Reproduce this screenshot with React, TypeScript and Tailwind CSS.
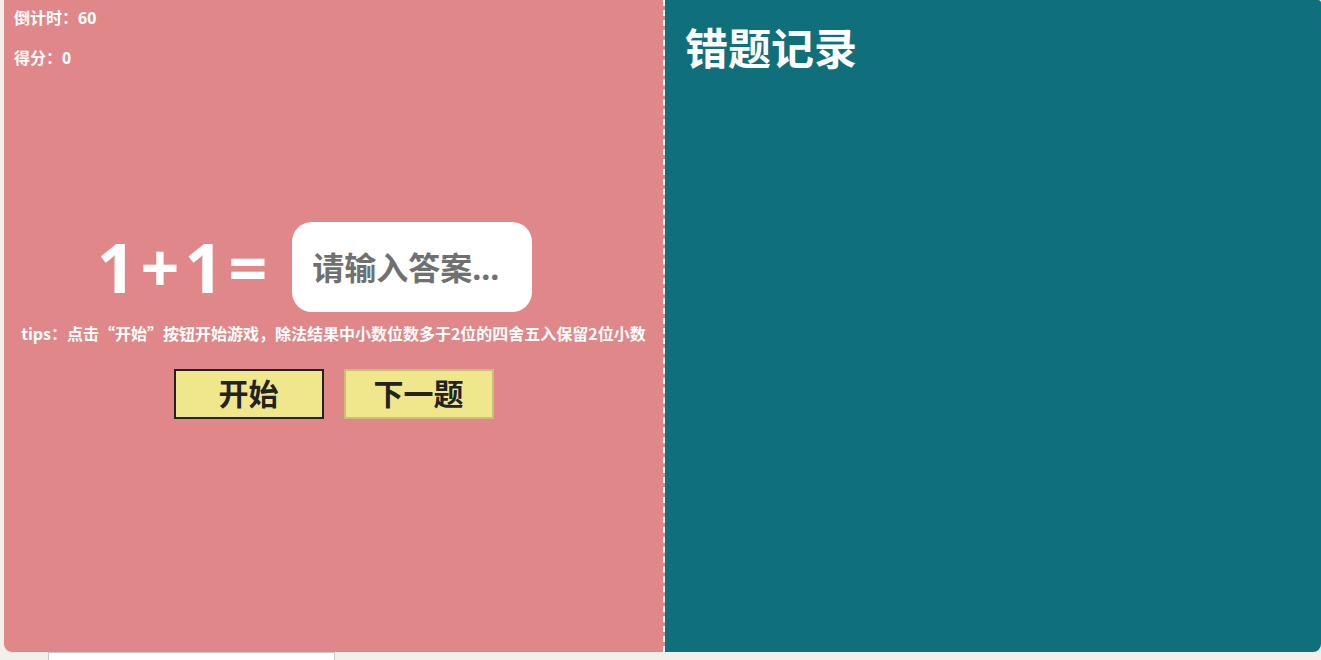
import React from "react";

const font = { fontFamily: '"Noto Sans", "Noto Sans CJK SC", sans-serif' };
const cjk = { fontFamily: '"Noto Sans CJK SC", sans-serif' };

export default function App() {
  return (
    <div className="h-[660px] w-[1321px] overflow-hidden bg-[#f3f0ec]" style={font}>
      <div className="ml-[4px] flex h-[652px] overflow-hidden rounded-b-[8px] rounded-tr-[3px]">
        {/* game panel */}
        <section className="w-[661px] shrink-0 border-r-2 border-dashed border-white bg-[#e08889] text-white">
          <div className="pl-[10px] pt-[9px] text-[16px] font-bold leading-[18px]">
            <p>倒计时：60</p>
            <p className="mt-[22px]">得分：0</p>
          </div>

          <div className="mt-[155px] flex h-[90px] items-center justify-center pr-[38px]">
            <span className="mr-[20px] text-[68px] font-bold leading-none tracking-[5px]">1+1=</span>
            <input
              type="text"
              placeholder="请输入答案..."
              className="h-[90px] w-[240px] rounded-[20px] bg-white px-[20px] text-[32px] font-bold text-[#707070] outline-none placeholder:text-[#707070]"
            />
          </div>

          <p className="mt-[10px] text-center text-[16px] font-bold leading-[22px]" style={cjk}>
            tips：点击“开始”按钮开始游戏，除法结果中小数位数多于2位的四舍五入保留2位小数
          </p>

          <div className="mt-[25px] flex justify-center gap-[20px]">
            <button
              type="button"
              className="h-[50px] w-[150px] border-2 border-[#222] bg-[#f0e68c] text-[30px] font-bold leading-none text-[#222]"
            >
              开始
            </button>
            <button
              type="button"
              className="h-[50px] w-[150px] border-2 border-[#c8bf79] bg-[#f0e68c] text-[30px] font-bold leading-none text-[#222]"
            >
              下一题
            </button>
          </div>
        </section>

        {/* wrong answers */}
        <section className="flex-1 bg-[#0f6f7b] px-[20px] pt-[20px] text-white">
          <h2 className="text-[43px] font-bold leading-[58px]">错题记录</h2>
        </section>
      </div>
      <div className="flex h-[8px]">
        <div className="ml-[48px] w-[287px] border border-b-0 border-[#c9c9c9] bg-white" />
      </div>
    </div>
  );
}
